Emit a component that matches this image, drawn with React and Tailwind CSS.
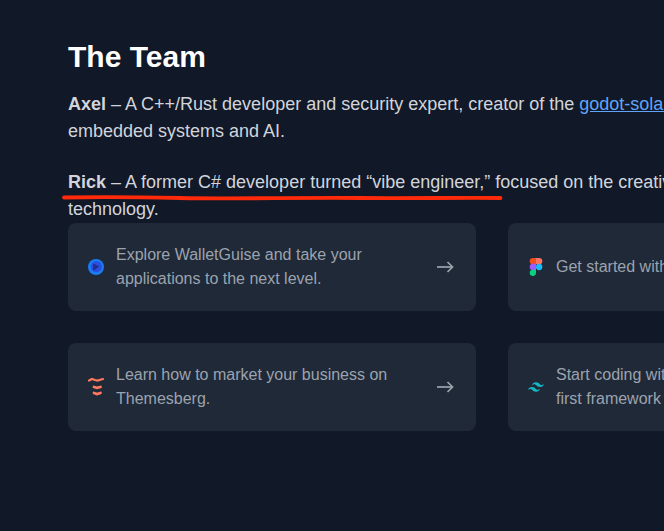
const WalletGuiseIcon = () => (
  <svg viewBox="0 0 20 20" className="w-4 h-4">
    <circle cx="10" cy="10" r="10" fill="#1a7cf5" />
    <circle cx="10.500" cy="9.500" r="7" fill="#2a4fe0" />
    <path d="M6.500 5.500 14 9.500 9.500 12.500 6.500 15Z" fill="#1c2f8c" />
  </svg>
);

const FigmaIcon = () => (
  <svg viewBox="3 0 14 20" className="w-[14px] h-[18px] mx-auto">
    <path d="M3 3.500A3.500 3.500 0 0 1 6.500 0H10V7H6.500A3.500 3.500 0 0 1 3 3.500Z" fill="#f24e1e" />
    <path d="M10 0h3.500a3.500 3.500 0 0 1 0 7H10Z" fill="#ff7262" />
    <path d="M3 10a3.500 3.500 0 0 1 3.500-3.500H10v7H6.500A3.500 3.500 0 0 1 3 10Z" fill="#a259ff" />
    <circle cx="13.500" cy="10" r="3.500" fill="#1abcfe" />
    <path d="M3 16.500A3.500 3.500 0 0 1 6.500 13H10v3.500a3.500 3.500 0 0 1-7 0Z" fill="#0acf83" />
  </svg>
);

const ThemesbergIcon = () => (
  <svg viewBox="0 0 16 20" className="w-4 h-5" fill="none" stroke="#fe795d" strokeLinecap="round">
    <path d="M1 3.500 4 2 7 3 9.500 3.500 15 2" strokeWidth="2.200" />
    <path d="M6 10 9 10.800 12.500 10" strokeWidth="2.800" />
    <path d="M6 16 9 17 12.500 16" strokeWidth="2.800" />
  </svg>
);

const TailwindIcon = () => (
  <svg viewBox="2 6 20 12" className="w-4 h-[10px]" fill="#14b8c4">
    <path d="M12 6c-2.700 0-4.300 1.300-5 4 1-1.300 2.200-1.800 3.500-1.500.8.200 1.300.7 2 1.400 1 1.100 2.200 2.100 4.500 2.100 2.700 0 4.300-1.300 5-4-1 1.300-2.200 1.800-3.500 1.500-.8-.2-1.300-.7-2-1.400C15.500 7 14.300 6 12 6ZM7 12c-2.700 0-4.300 1.300-5 4 1-1.300 2.200-1.800 3.500-1.500.8.200 1.300.7 2 1.400C8.500 17 9.700 18 12 18c2.700 0 4.300-1.300 5-4-1 1.300-2.200 1.800-3.500 1.500-.8-.2-1.300-.7-2-1.400C10.500 13 9.300 12 7 12Z" />
  </svg>
);

const ArrowIcon = () => (
  <svg viewBox="0 0 20 20" className="w-5 h-5 shrink-0" fill="none" stroke="#9ca3af" strokeWidth="1.700">
    <path d="M1 10H16" />
    <path d="M11.500 5l5 5-5 5" />
  </svg>
);

const cards = [
  { icon: <WalletGuiseIcon />, text: 'Explore WalletGuise and take your applications to the next level.' },
  { icon: <FigmaIcon />, text: 'Get started with our Figma file.' },
  { icon: <ThemesbergIcon />, text: 'Learn how to market your business on Themesberg.' },
  { icon: <TailwindIcon />, text: 'Start coding with Tailwind, the utility-first framework today.' },
];

function LinkCard({ icon, text }) {
  return (
    <a className="flex items-center justify-between p-5 rounded-lg bg-[#1f2937] text-[#9ca3af] h-[88px]">
      <div className="flex items-center gap-3">
        <div className="w-4 shrink-0">{icon}</div>
        <span className="w-[280px]">{text}</span>
      </div>
      <ArrowIcon />
    </a>
  );
}

export default function App() {
  return (
    <div className="relative w-[664px] h-[531px] overflow-hidden bg-[#111827] font-['Liberation_Sans',Arial,sans-serif]">
      <div className="w-[848px] ml-[68px] pt-[38px]">
        <h2 className="text-3xl font-bold text-white leading-[38px]">The Team</h2>
        <p className="mt-[15px] text-lg leading-[27px] text-[#d1d5db]">
          <strong className="font-bold">Axel</strong> – A C++/Rust developer and security expert, creator of the{' '}
          <a className="text-[#60a5fa] underline">godot-solana-sdk</a>, with a focus on
          <br />
          embedded systems and AI.
        </p>
        <p className="mt-6 text-lg leading-[27px] text-[#d1d5db]">
          <strong className="font-bold">Rick</strong> – A former C# developer turned “vibe engineer,” focused on the creative side of
          <br />
          technology.
        </p>
        <div className="grid grid-cols-2 gap-8">
          {cards.map((card) => (
            <LinkCard key={card.text} icon={card.icon} text={card.text} />
          ))}
        </div>
      </div>

      {/* hand drawn red underline on top of the screenshot */}
      <svg viewBox="0 0 664 531" className="absolute inset-0 w-[664px] h-[531px] pointer-events-none" fill="none">
        <path
          d="M64 197.500C110 196.500 135 197 180 198C230 199 300 197.500 360 198C410 198.500 460 197.500 500.500 198"
          stroke="#ff2a0a"
          strokeWidth="3.800"
          strokeLinecap="round"
        />
      </svg>
    </div>
  );
}
